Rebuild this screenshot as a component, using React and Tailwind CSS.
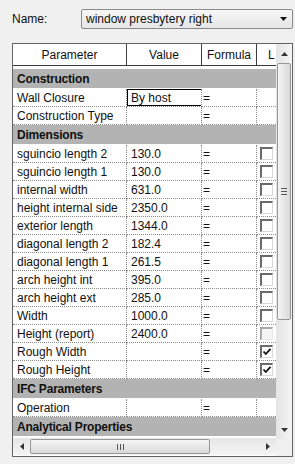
import React from "react";

const rows = [
  { g: "Construction" },
  { l: "Wall Closure", v: "By host", edit: true },
  { l: "Construction Type", v: "" },
  { g: "Dimensions" },
  { l: "sguincio length 2", v: "130.0", cb: "off" },
  { l: "sguincio length 1", v: "130.0", cb: "off" },
  { l: "internal width", v: "631.0", cb: "off" },
  { l: "height internal side", v: "2350.0", cb: "off" },
  { l: "exterior length", v: "1344.0", cb: "off" },
  { l: "diagonal length 2", v: "182.4", cb: "off" },
  { l: "diagonal length 1", v: "261.5", cb: "off" },
  { l: "arch height int", v: "395.0", cb: "off" },
  { l: "arch height ext", v: "285.0", cb: "off" },
  { l: "Width", v: "1000.0", cb: "off" },
  { l: "Height (report)", v: "2400.0", cb: "dis" },
  { l: "Rough Width", v: "", cb: "on" },
  { l: "Rough Height", v: "", cb: "on" },
  { g: "IFC Parameters" },
  { l: "Operation", v: "" },
  { g: "Analytical Properties" },
];

function Check({ state }) {
  const dis = state === "dis";
  return (
    <div
      className={
        "relative w-[13px] h-[13px] border-t-2 border-l-2 border-b border-r " +
        (dis
          ? "border-t-[#a8a8a8] border-l-[#a8a8a8] border-b-[#e8e8e8] border-r-[#e8e8e8] bg-[#f4f4f4]"
          : "border-t-[#6a6a6a] border-l-[#6a6a6a] border-b-[#d8d8d8] border-r-[#d8d8d8] bg-white")
      }
    >
      {state === "on" && (
        <svg viewBox="0 0 10 10" className="absolute left-[0px] top-[0px] w-[10px] h-[10px]">
          <path d="M1.5 4.5 L3.8 7 L8.5 1.8" fill="none" stroke="#111" strokeWidth="1.8" />
        </svg>
      )}
    </div>
  );
}

function Row({ r }) {
  if (r.g) {
    return (
      <div className="h-[20px] bg-[#b3b3b3] border-b border-white flex items-center pl-[4px] font-bold text-[12px] text-[#111] tracking-[-0.2px]">
        {r.g}
      </div>
    );
  }
  const cell = "h-[18px] border-b border-r border-dotted border-[#8a8a8a] flex items-center overflow-hidden whitespace-nowrap";
  return (
    <div className="grid grid-cols-[114px_75px_55px_19px] h-[18px]">
      <div className={cell + " pl-[4px]"}>{r.l}</div>
      <div className={cell + " relative"}>
        {r.edit ? (
          <div className="absolute left-0 top-0 w-[75px] h-[17px] border border-black bg-white pl-[3px] flex items-center">
            {r.v}
          </div>
        ) : (
          <span className="pl-[4px]">{r.v}</span>
        )}
      </div>
      <div className={cell + " pl-[1px]"}>=</div>
      <div className="h-[18px] border-b border-dotted border-[#8a8a8a] flex items-center pl-[3px]">
        {r.cb && <Check state={r.cb} />}
      </div>
    </div>
  );
}

export default function App() {
  return (
    <div
      className="w-[295px] h-[464px] bg-[#f0f0f0] text-[12px] text-[#111] overflow-hidden"
      style={{ fontFamily: '"Liberation Sans", Arial, sans-serif' }}
    >
      <div className="flex items-center pt-[9px] pl-[12px] h-[29px]">
        <div className="w-[69px]">Name:</div>
        <div className="w-[212px] h-[20px] border border-[#8a8a8a] rounded-[2px] bg-gradient-to-b from-[#f6f6f6] to-[#e6e6e6] flex items-center pl-[4px] pr-[5px]">
          <span className="flex-1">window presbytery right</span>
          <svg viewBox="0 0 7 4" className="w-[7px] h-[4px]">
            <path d="M0 0 L7 0 L3.5 4 Z" fill="#111" />
          </svg>
        </div>
      </div>

      <div className="ml-[12px] mt-[14px] w-[281px] h-[414px] border border-[#646464] bg-white flex">
        <div className="w-[263px] flex flex-col">
          <div className="grid grid-cols-[114px_75px_55px_19px] h-[22px] border-b border-[#3c3c3c] bg-white">
            <div className="border-r border-[#3c3c3c] flex items-center justify-center">Parameter</div>
            <div className="border-r border-[#3c3c3c] flex items-center justify-center">Value</div>
            <div className="border-r border-[#3c3c3c] flex items-center justify-center">Formula</div>
            <div className="flex items-center pl-[11px]">L</div>
          </div>
          <div className="h-[372px] overflow-hidden pt-[3px]">
            {rows.map((r, i) => (
              <Row key={i} r={r} />
            ))}
          </div>
          <div className="h-[17px] bg-gradient-to-b from-[#e6e6e6] to-[#f4f4f4] flex items-center">
            <div className="w-[17px] flex justify-center">
              <svg viewBox="0 0 4 7" className="w-[4px] h-[7px]">
                <path d="M4 0 L4 7 L0 3.5 Z" fill="#333" />
              </svg>
            </div>
            <div className="w-[180px] h-[15px] rounded-[2px] border border-[#979797] bg-gradient-to-b from-[#f5f5f5] to-[#d9d9d9] flex items-center justify-center">
              <div className="flex gap-[2px]">
                <div className="w-[1px] h-[6px] bg-[#555]" />
                <div className="w-[1px] h-[6px] bg-[#555]" />
                <div className="w-[1px] h-[6px] bg-[#555]" />
              </div>
            </div>
            <div className="flex-1" />
            <div className="w-[17px] flex justify-center">
              <svg viewBox="0 0 4 7" className="w-[4px] h-[7px]">
                <path d="M0 0 L0 7 L4 3.5 Z" fill="#333" />
              </svg>
            </div>
          </div>
        </div>
        <div className="w-[16px] flex flex-col">
          <div className="h-[395px] bg-gradient-to-r from-[#e4e4e4] to-[#f4f4f4] flex flex-col items-center">
            <div className="h-[19px] flex items-center justify-center">
              <svg viewBox="0 0 7 4" className="w-[7px] h-[4px]">
                <path d="M0 4 L7 4 L3.5 0 Z" fill="#333" />
              </svg>
            </div>
            <div className="w-[14px] h-[257px] rounded-[2px] border border-[#979797] bg-gradient-to-r from-[#f5f5f5] to-[#d9d9d9] flex items-center justify-center">
              <div className="flex flex-col gap-[2px]">
                <div className="w-[6px] h-[1px] bg-[#555]" />
                <div className="w-[6px] h-[1px] bg-[#555]" />
                <div className="w-[6px] h-[1px] bg-[#555]" />
              </div>
            </div>
            <div className="flex-1" />
            <div className="h-[19px] flex items-center justify-center">
              <svg viewBox="0 0 7 4" className="w-[7px] h-[4px]">
                <path d="M0 0 L7 0 L3.5 4 Z" fill="#333" />
              </svg>
            </div>
          </div>
          <div className="flex-1 bg-[#f0f0f0]" />
        </div>
      </div>
    </div>
  );
}
